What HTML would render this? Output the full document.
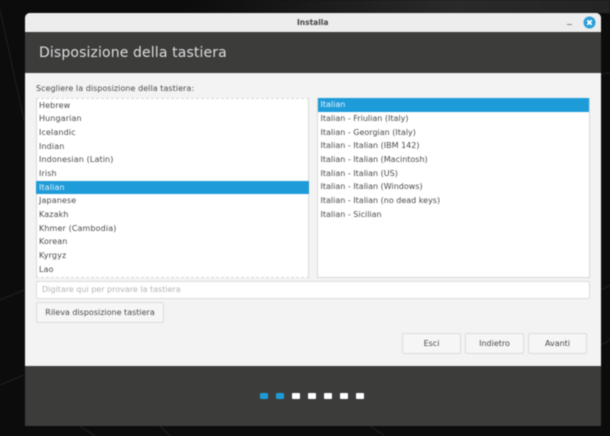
<!DOCTYPE html>
<html lang="it"><head><meta charset="utf-8"><title>Installa</title>
<style>
html,body{margin:0;padding:0;width:610px;height:436px;overflow:hidden;background:#0c0c0c}
body{position:relative;font-family:"DejaVu Sans","Liberation Sans",sans-serif;font-size:8px;color:#4a4a4a}
.a{position:absolute;box-sizing:border-box}
.t{position:absolute;white-space:nowrap;line-height:14px;height:14px}
.l{letter-spacing:.12px}
#wrap{position:absolute;left:0;top:0;width:610px;height:436px;filter:blur(.5px)}
.list{background:#fff;border:1px solid #d8d8d8}
.btn{background:#f6f6f6;border:1px solid #dcdcdc;border-radius:2px;text-align:center;color:#4a4a4a;line-height:20px}
.dot{position:absolute;top:393px;width:8px;height:6px;background:#fff;border-radius:1px}
</style></head>
<body>
<div id="wrap">
<svg class="a" style="left:0;top:0" width="610" height="436">
<defs><linearGradient id="g" x1="0" x2="1" y1="0" y2="0"><stop offset="0.3" stop-color="#0c0c0c"/><stop offset="0.75" stop-color="#2a2a2a"/><stop offset="1" stop-color="#242424"/></linearGradient></defs>
<rect x="0" y="0" width="610" height="13" fill="url(#g)"/>
<path d="M0 10L24 120M0 300L24 290M0 385L24 375M601 75L610 72M601 345L610 340M601 290L610 285M80 426L95 436M160 426L170 436M370 426L385 436" stroke="#1b1b1b" stroke-width="1.5" fill="none"/>
</svg>
<div class="a" style="left:25px;top:13px;width:576px;height:413px;background:#f3f3f3;border-radius:5px 5px 0 0;overflow:hidden">
  <div class="a" style="left:0;top:0;width:576px;height:19px;background:#ededed"></div>
  <div class="a" style="left:0;top:19px;width:576px;height:41px;background:#3c3c3b"></div>
  <div class="a" style="left:0;top:353px;width:576px;height:60px;background:#3c3c3b"></div>
</div>
<div class="t" style="left:297px;top:16px;font-weight:bold;font-size:7.5px;color:#444;">Installa</div>
<div class="a" style="left:567px;top:24px;width:5px;height:1px;background:#888"></div>
<svg class="a" style="left:583px;top:16px" width="13" height="13" viewBox="0 0 13 13"><circle cx="6.5" cy="6.5" r="6" fill="#2a9fd8"/><path d="M4.3 4.3L8.7 8.7M8.7 4.3L4.3 8.7" stroke="#fff" stroke-width="1.8"/></svg>
<div class="t" style="left:39px;top:45px;font-size:14px;line-height:16px;height:16px;color:#dedede;letter-spacing:.13px;">Disposizione della tastiera</div>

<div class="t" style="left:36px;top:82px;letter-spacing:.05px">Scegliere la disposizione della tastiera:</div>

<div class="a list" style="left:36px;top:98px;width:273px;height:180px;border-style:dashed solid"></div>
<div class="a" style="left:36px;top:180.5px;width:273px;height:13.5px;background:#1e9bd9"></div>
<div class="t l" style="left:39px;top:99px">Hebrew</div>
<div class="t l" style="left:39px;top:112px">Hungarian</div>
<div class="t l" style="left:39px;top:126px">Icelandic</div>
<div class="t l" style="left:39px;top:140px">Indian</div>
<div class="t l" style="left:39px;top:153px">Indonesian (Latin)</div>
<div class="t l" style="left:39px;top:167px">Irish</div>
<div class="t l" style="left:39px;top:181px;color:#e8f5fc">Italian</div>
<div class="t l" style="left:39px;top:194px">Japanese</div>
<div class="t l" style="left:39px;top:208px">Kazakh</div>
<div class="t l" style="left:39px;top:222px">Khmer (Cambodia)</div>
<div class="t l" style="left:39px;top:235px">Korean</div>
<div class="t l" style="left:39px;top:249px">Kyrgyz</div>
<div class="t l" style="left:39px;top:263px">Lao</div>

<div class="a list" style="left:317px;top:98px;width:273px;height:180px"></div>
<div class="a" style="left:318px;top:98px;width:271px;height:14px;background:#1e9bd9"></div>
<div class="t" style="left:320.500px;top:98px;color:#e8f5fc">Italian</div>
<div class="t" style="left:320.500px;top:112px">Italian - Friulian (Italy)</div>
<div class="t" style="left:320.500px;top:126px">Italian - Georgian (Italy)</div>
<div class="t" style="left:320.500px;top:139px">Italian - Italian (IBM 142)</div>
<div class="t" style="left:320.500px;top:153px">Italian - Italian (Macintosh)</div>
<div class="t" style="left:320.500px;top:167px">Italian - Italian (US)</div>
<div class="t" style="left:320.500px;top:180px">Italian - Italian (Windows)</div>
<div class="t" style="left:320.500px;top:194px">Italian - Italian (no dead keys)</div>
<div class="t" style="left:320.500px;top:208px">Italian - Sicilian</div>

<div class="a" style="left:36px;top:281px;width:554px;height:18px;background:#fff;border:1px solid #dcdcdc;border-radius:2px"></div>
<div class="t" style="left:42px;top:283px;color:#b4b4b4">Digitare qui per provare la tastiera</div>

<div class="a btn" style="left:36px;top:302px;width:128px;height:21px;">Rileva disposizione tastiera</div>
<div class="a btn" style="left:402px;top:333px;width:59px;height:21px;">Esci</div>
<div class="a btn" style="left:465px;top:333px;width:59px;height:21px;">Indietro</div>
<div class="a btn" style="left:528px;top:333px;width:59px;height:21px;">Avanti</div>

<div class="dot" style="left:260px;background:#1e9bd9"></div>
<div class="dot" style="left:276px;background:#1e9bd9"></div>
<div class="dot" style="left:292px"></div>
<div class="dot" style="left:308px"></div>
<div class="dot" style="left:324px"></div>
<div class="dot" style="left:340px"></div>
<div class="dot" style="left:356px"></div>
</div>
</body></html>
